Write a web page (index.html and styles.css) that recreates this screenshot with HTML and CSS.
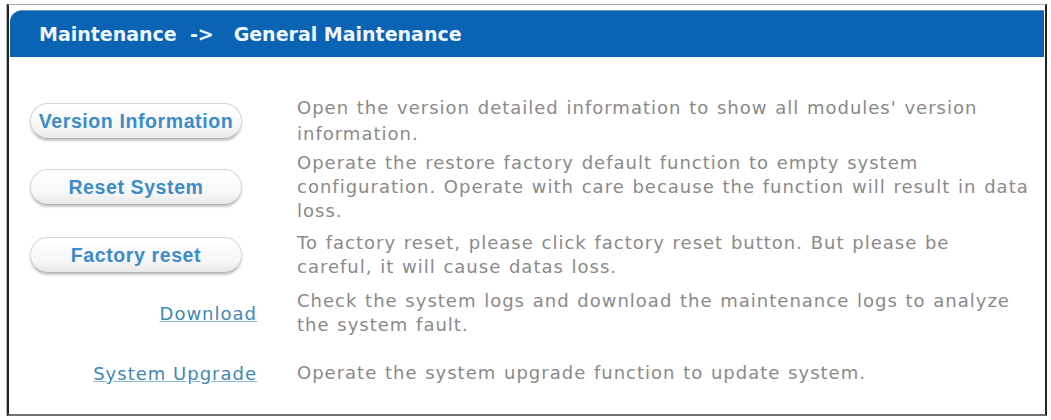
FILE: index.html
```html
<!DOCTYPE html>
<html lang="en">
<head>
  <meta charset="UTF-8">
  <title>General Maintenance</title>
  <link rel="stylesheet" href="styles.css">
</head>
<body>

  <div class="panel">
    <!-- Breadcrumb title bar -->
    <div class="panel-head">Maintenance&nbsp; -&gt;&nbsp;&nbsp; General Maintenance</div>

    <!-- Maintenance actions -->
    <div class="maint">
      <div class="action"><button class="pill">Version Information</button></div>
      <div class="desc first">Open the version detailed information to show all modules' version information.</div>

      <div class="action"><button class="pill">Reset System</button></div>
      <div class="desc">Operate the restore factory default function to empty system configuration. Operate with care because the function will result in data loss.</div>

      <div class="action factory"><button class="pill">Factory reset</button></div>
      <div class="desc factory">To factory reset, please click factory reset button. But please be<br>careful, it will cause datas loss.</div>

      <div class="action logs"><a href="#" class="link">Download</a></div>
      <div class="desc logs">Check the system logs and download the maintenance logs to analyze the system fault.</div>

      <div class="action last"><a href="#" class="link">System Upgrade</a></div>
      <div class="desc last">Operate the system upgrade function to update system.</div>
    </div>
  </div>

</body>
</html>
```

FILE: styles.css
```css
body {
  margin: 0;
  padding: 4px 2px 0 7px;
  background: #fff;
  font-family: "DejaVu Sans", Verdana, sans-serif;
}

/* Outer frame */
.panel {
  width: 1036px;
  height: 409px;
  border-top: 1px solid #a8a8a8;
  border-left: 2px solid #222;
  border-right: 2px solid #222;
  border-bottom: 2px solid #707070;
  box-shadow: -1px 0 0 #b8b8b8;
}

/* Blue title bar */
.panel-head {
  margin: 5px 1px 0 1px;
  height: 47px;
  line-height: 46px;
  padding-left: 29px;
  background: #0b63b4;
  border-top-left-radius: 12px;
  border-top: 1px solid #5f8fc0;
  box-sizing: border-box;
  color: #eef7ff;
  font-weight: bold;
  font-size: 19px;
}

/* Two column list: actions on the left, text on the right */
.maint {
  display: grid;
  grid-template-columns: 227px 1fr;
  column-gap: 40px;
  row-gap: 4px;
  padding: 38px 10px 0 21px;
  align-items: center;
}
.action {
  text-align: right;
}
.factory {
  margin-top: 4px;
}
.logs {
  margin-top: 6px;
}
.last {
  margin-top: 20px;
}

.desc {
  color: #8a8a8a;
  font-size: 18px;
  letter-spacing: 1px;
  word-spacing: 1px;
  line-height: 24px;
}
.desc.first {
  line-height: 26px;
}

.pill {
  display: block;
  width: 212px;
  height: 36px;
  padding: 0;
  border: 1px solid #d6d6d6;
  border-bottom-color: #b4b4b4;
  border-radius: 18px;
  background: linear-gradient(#ffffff, #f6f6f6 70%, #e8e8e8);
  box-shadow: 0 2px 2px rgba(0, 0, 0, 0.22);
  color: #3c8cca;
  font-family: "Liberation Sans", Arial, sans-serif;
  font-weight: bold;
  font-size: 19.5px;
  letter-spacing: 0.6px;
  cursor: pointer;
}

.link {
  color: #3f89b6;
  font-size: 18px;
  letter-spacing: 1px;
  text-decoration: underline;
  text-decoration-color: #8cbbd6;
}
```
